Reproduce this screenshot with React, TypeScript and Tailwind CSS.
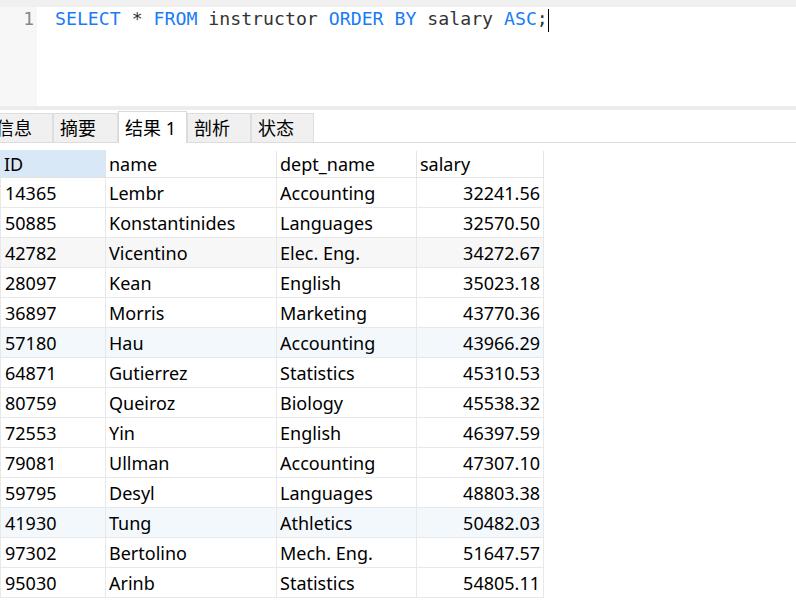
import React from 'react'

const rows = [
  ['14365', 'Lembr', 'Accounting', '32241.56'],
  ['50885', 'Konstantinides', 'Languages', '32570.50'],
  ['42782', 'Vicentino', 'Elec. Eng.', '34272.67'],
  ['28097', 'Kean', 'English', '35023.18'],
  ['36897', 'Morris', 'Marketing', '43770.36'],
  ['57180', 'Hau', 'Accounting', '43966.29'],
  ['64871', 'Gutierrez', 'Statistics', '45310.53'],
  ['80759', 'Queiroz', 'Biology', '45538.32'],
  ['72553', 'Yin', 'English', '46397.59'],
  ['79081', 'Ullman', 'Accounting', '47307.10'],
  ['59795', 'Desyl', 'Languages', '48803.38'],
  ['41930', 'Tung', 'Athletics', '50482.03'],
  ['97302', 'Bertolino', 'Mech. Eng.', '51647.57'],
  ['95030', 'Arinb', 'Statistics', '54805.11'],
]

const tabs = ['信息', '摘要', '结果 1', '剖析', '状态']
const tabWidths = ['-ml-[11px] w-[64px]', 'w-[65px]', 'w-[69px]', 'w-[64px]', 'w-[63px]']

function App() {
  const kw = 'text-[#1a7cf5]'

  return (
    <div className="w-[796px] h-[602px] overflow-hidden bg-white text-black font-['Noto_Sans','Noto_Sans_CJK_SC',sans-serif]">
      {/* editor */}
      <div className="h-[7px] bg-[#f0f0f0]" />
      <div className="flex h-[99px]">
        <div className="w-[37px] bg-[#f7f7f7] flex justify-end pr-[3px] pt-0">
          <span className="font-['DejaVu_Sans_Mono',monospace] text-[18px] leading-[24px] text-[#888]">1</span>
        </div>
        <div className="flex-1 pl-[18px] pt-0">
          <div className="font-['DejaVu_Sans_Mono',monospace] text-[18.2px] leading-[24px] text-[#333] whitespace-pre">
            <span className={kw}>SELECT</span> * <span className={kw}>FROM</span> instructor <span className={kw}>ORDER</span> <span className={kw}>BY</span> salary <span className={kw}>ASC</span>;<span className="inline-block w-[1px] h-[23px] bg-black align-middle" />
          </div>
        </div>
      </div>
      <div className="h-[4px] bg-[#ececec]" />

      {/* tabs */}
      <div className="h-[33px] flex items-end border-b border-[#dcdcdc]">
        {tabs.map((t, i) => {
          const active = i === 2
          return (
            <div
              key={t}
              className={`${tabWidths[i]} ${
                active
                  ? 'h-[32px] bg-white border border-b-0 border-[#d9d9d9] -mb-px'
                  : 'h-[29px] bg-[#f0f0f0] border border-b-0 border-[#dedede]'
              } flex items-center pl-[6px] text-[18px] leading-none shrink-0`}
            >
              {t}
            </div>
          )
        })}
      </div>

      {/* result grid */}
      <div className="mt-[7px] w-[544px] text-[18px]">
        <div className="flex h-[28px] border-b border-[#e3e3e3] leading-[27px] pt-px">
          <div className="w-[106px] bg-[#d9e8f7] pl-[4px] border-r border-[#e3e3e3] -mt-px pt-px">ID</div>
          <div className="w-[171px] pl-[3px] border-r border-[#e3e3e3]">name</div>
          <div className="w-[140px] pl-[3px] border-r border-[#e3e3e3]">dept_name</div>
          <div className="w-[127px] pl-[3px] border-r border-[#e3e3e3]">salary</div>
        </div>
        {rows.map((r, i) => (
          <div
            key={r[0]}
            className={`flex h-[30px] border-b border-[#e8e8e8] leading-[29px] ${
              i === 5 || i === 11 ? 'bg-[#f3f8fd]' : i === 2 ? 'bg-[#f7f7f7]' : ''
            }`}
          >
            <div className="w-[106px] pl-[4px] pt-px border-r border-l border-[#e8e8e8]">{r[0]}</div>
            <div className="w-[171px] pl-[3px] pt-px border-r border-[#e8e8e8]">{r[1]}</div>
            <div className="w-[140px] pl-[3px] pt-px border-r border-[#e8e8e8]">{r[2]}</div>
            <div className="w-[127px] pr-[3px] pt-px text-right border-r border-[#e8e8e8]">{r[3]}</div>
          </div>
        ))}
      </div>
    </div>
  )
}

export default App
